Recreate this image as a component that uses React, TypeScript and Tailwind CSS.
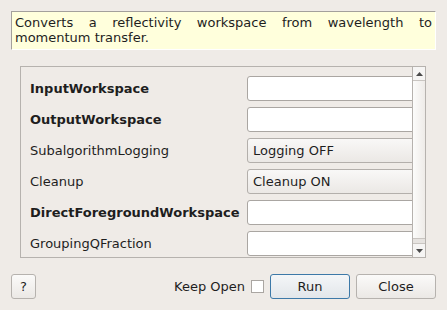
import React from "react";

const font = { fontFamily: '"DejaVu Sans", "Liberation Sans", sans-serif' };

function TextBox() {
  return (
    <div className="h-[25px] w-[190px] shrink-0 rounded-[3px] border border-[#aaa6a2] bg-white" />
  );
}

function Combo({ text }: { text: string }) {
  return (
    <div className="flex h-[25px] w-[190px] shrink-0 items-center rounded-[3px] border border-[#b3afab] bg-gradient-to-b from-[#f9f8f7] to-[#ebe8e5] pl-[5px] text-[13px] text-[#1e1e1e]">
      {text}
    </div>
  );
}

const rows: { label: string; bold: boolean; kind: "text" | "combo"; value?: string }[] = [
  { label: "InputWorkspace", bold: true, kind: "text" },
  { label: "OutputWorkspace", bold: true, kind: "text" },
  { label: "SubalgorithmLogging", bold: false, kind: "combo", value: "Logging OFF" },
  { label: "Cleanup", bold: false, kind: "combo", value: "Cleanup ON" },
  { label: "DirectForegroundWorkspace", bold: true, kind: "text" },
  { label: "GroupingQFraction", bold: false, kind: "text" },
];

export default function App() {
  return (
    <div
      className="flex h-[310px] w-[447px] flex-col overflow-hidden bg-[#efebe7] text-[#1e1e1e]"
      style={font}
    >
      <div className="ml-[11px] mt-[11px] h-[39px] w-[425px] border-l border-t border-b border-r border-l-[#a3a09c] border-t-[#a3a09c] border-r-white border-b-white bg-[#ffffdc] pl-[3px] pr-[3px] pt-[3px] text-[13px] leading-[15px] [text-align:justify]">
        Converts a reflectivity workspace from wavelength to momentum transfer.
      </div>

      <div className="ml-[20px] mt-[16px] flex h-[192px] w-[406px] border border-[#b6b2ae]">
        <div className="flex flex-1 flex-col gap-[6px] overflow-hidden pl-[9px] pt-[9px]">
          {rows.map((r) => (
            <div key={r.label} className="flex h-[25px] shrink-0 items-center">
              <div
                className={
                  "w-[217px] shrink-0 whitespace-nowrap text-[13px] " +
                  (r.bold ? "font-bold" : "font-normal")
                }
              >
                {r.label}
              </div>
              {r.kind === "text" ? <TextBox /> : <Combo text={r.value ?? ""} />}
            </div>
          ))}
        </div>
        <div className="flex w-[13px] shrink-0 flex-col border-l border-[#b6b2ae] bg-[#ebe8e5]">
          <div className="flex h-[14px] items-center justify-center border-b border-[#c9c5c1] bg-[#f6f5f4]">
            <svg width="7" height="4" viewBox="0 0 7 4">
              <path d="M0 4 L3.5 0 L7 4 Z" fill="#4a4a4a" />
            </svg>
          </div>
          <div className="h-[158px] border-b border-[#c9c5c1] bg-gradient-to-r from-[#fcfcfb] to-[#eeebe8]" />
          <div className="flex-1 bg-[#e6e3e0]" />
          <div className="flex h-[14px] items-center justify-center border-t border-[#c9c5c1] bg-[#f6f5f4]">
            <svg width="7" height="4" viewBox="0 0 7 4">
              <path d="M0 0 L7 0 L3.5 4 Z" fill="#4a4a4a" />
            </svg>
          </div>
        </div>
      </div>

      <div className="mt-[16px] flex h-[25px] items-center pl-[11px] pr-[11px]">
        <div className="flex h-[25px] w-[25px] items-center justify-center rounded-[3px] border border-[#b6b2ae] bg-gradient-to-b from-[#fbfaf9] to-[#ebe8e5] text-[13px]">
          ?
        </div>
        <div className="flex-1" />
        <span className="text-[13px]">Keep Open</span>
        <div className="ml-[6px] h-[13px] w-[13px] border border-[#aaa6a2] bg-white" />
        <div className="ml-[6px] flex h-[25px] w-[80px] items-center justify-center rounded-[3px] border border-[#3d79a8] bg-gradient-to-b from-[#f4f6f8] to-[#e2e6ea] text-[13px]">
          Run
        </div>
        <div className="ml-[6px] flex h-[25px] w-[80px] items-center justify-center rounded-[3px] border border-[#b6b2ae] bg-gradient-to-b from-[#fbfaf9] to-[#ebe8e5] text-[13px]">
          Close
        </div>
      </div>
    </div>
  );
}
